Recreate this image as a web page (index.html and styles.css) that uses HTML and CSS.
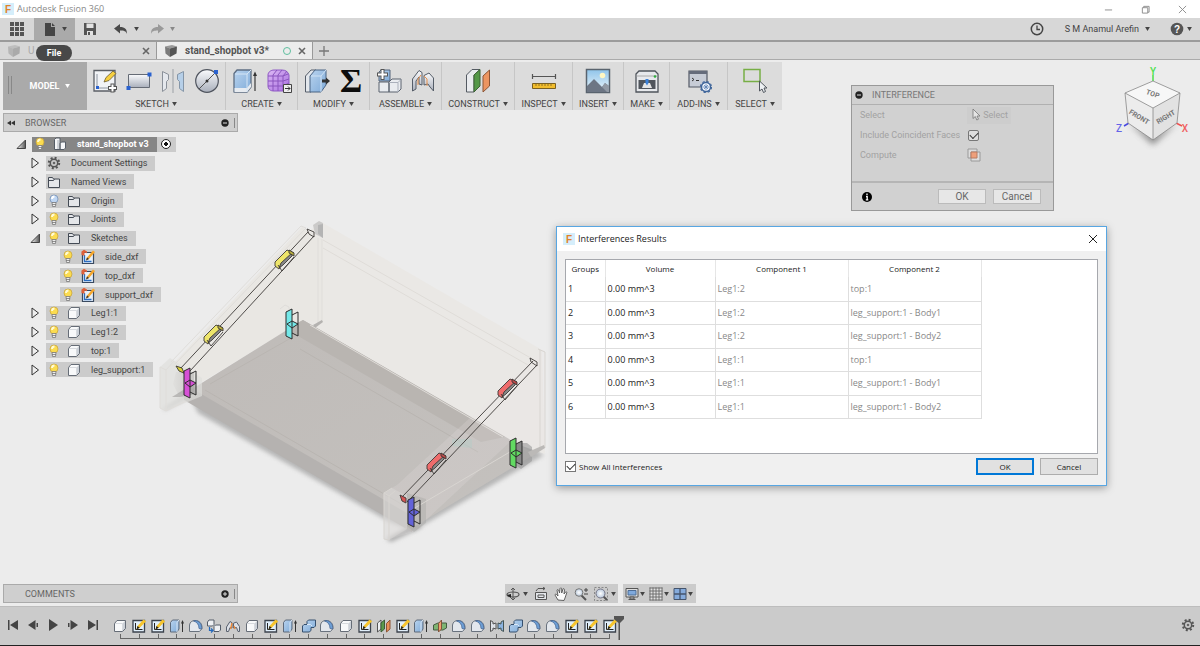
FILE: index.html
```html
<!DOCTYPE html>
<html lang="en">
<head>
<meta charset="utf-8">
<title>Autodesk Fusion 360</title>
<link rel="stylesheet" href="styles.css">
</head>
<body>
<svg class="defs" width="0" height="0" aria-hidden="true">
  <defs>
    <linearGradient id="g-steel" x1="0" y1="0" x2="0" y2="1"><stop offset="0" stop-color="#fafbfd"/><stop offset="1" stop-color="#a9afbb"/></linearGradient>
    <linearGradient id="g-blue" x1="0" y1="0" x2="1" y2="1"><stop offset="0" stop-color="#b9d3ee"/><stop offset="1" stop-color="#7fabd9"/></linearGradient>
    <linearGradient id="g-sky" x1="0" y1="0" x2="0" y2="1"><stop offset="0" stop-color="#8fc4ea"/><stop offset="1" stop-color="#eef7fb"/></linearGradient>
    <linearGradient id="g-purple" x1="0" y1="0" x2="1" y2="1"><stop offset="0" stop-color="#dcb8f5"/><stop offset="1" stop-color="#a96fe0"/></linearGradient>
    <linearGradient id="g-tri" x1="0" y1="0" x2="1" y2="0"><stop offset="0" stop-color="#fff"/><stop offset="1" stop-color="#555"/></linearGradient>
    <radialGradient id="g-lens"><stop offset="0" stop-color="#fff"/><stop offset="1" stop-color="#b9c9dc"/></radialGradient>
  </defs>
  <symbol id="logo" viewBox="0 0 12 12"><rect width="12" height="12" fill="#d5eefb"/><text x="3" y="10" font-family="Liberation Sans" font-weight="700" font-size="10" fill="#e0812a">F</text></symbol>
  <symbol id="caret" viewBox="0 0 6 5"><path d="M0 0h6L3 5z" fill="currentColor"/></symbol>
  <symbol id="cube" viewBox="0 0 14 14"><path d="M1 2.500 8 1l5 1.500-7 2z" fill="currentColor" opacity=".55"/><path d="M1 2.500l5 2V13L1.500 9.500z" fill="currentColor" opacity=".75"/><path d="M6 4.500l7-2-.5 7L6 13z" fill="currentColor"/></symbol>
  <symbol id="x" viewBox="0 0 8 8"><path d="M1 1l6 6M7 1L1 7" stroke="#666" stroke-width="1.600" fill="none"/></symbol>
  <symbol id="thinx" viewBox="0 0 10 10"><path d="M1 1l8 8M9 1L1 9" stroke="currentColor" fill="none"/></symbol>
  <symbol id="gear" viewBox="0 0 16 16"><circle cx="8" cy="8" r="5.200" fill="none" stroke="#555" stroke-width="2" stroke-dasharray="2 2.084"/><circle cx="8" cy="8" r="3.700" fill="none" stroke="#555" stroke-width="1.500"/><circle cx="8" cy="8" r="1.300" fill="#666"/></symbol>
  <symbol id="bulb" viewBox="0 0 16 16"><circle cx="8" cy="6" r="4" fill="#fbdc50" stroke="#c9a640" stroke-width=".8"/><path d="M6 6a2.500 2.500 0 0 1 2.500-2.500" stroke="#fffbd8" fill="none" stroke-width="1.800"/><path d="M6 9.500h4l-.5 4h-3z" fill="#eee" stroke="#777" stroke-width=".8"/><path d="M6 11.500h4" stroke="#777" stroke-width=".8"/></symbol>
  <symbol id="bulb-off" viewBox="0 0 16 16"><circle cx="8" cy="6" r="4" fill="#bfd6f3" stroke="#7590b5" stroke-width=".8"/><path d="M6 6a2.500 2.500 0 0 1 2.500-2.500" stroke="#fff" fill="none" stroke-width="1.800"/><path d="M6 9.500h4l-.5 4h-3z" fill="#eee" stroke="#777" stroke-width=".8"/><path d="M6 11.500h4" stroke="#777" stroke-width=".8"/></symbol>
  <symbol id="folder" viewBox="0 0 16 16"><path d="M2.500 13.500V3.500h4l1 1.500h6v8.500z" fill="#e4e6e9" stroke="#444b55"/><path d="M2.500 6.500h5l1-1.500" stroke="#444b55" fill="none"/></symbol>
  <symbol id="body" viewBox="0 0 16 16"><path d="M10.500 13.500v-8l3-3v8z" fill="#ccd1d8"/><path d="M2.500 5.500 5 2.500h8.500l-3 3v8h-8z" fill="#f8f9fa"/><path d="M2.500 5.500h8v8" stroke="#d7dade" fill="none"/><path d="M2.500 5.500 5 2.500h8.500v8l-3 3h-8z" fill="none" stroke="#666d77" stroke-linejoin="round"/></symbol>
  <symbol id="comp" viewBox="0 0 16 16"><path d="M2.500 3.500 4 2h4v11.500H2.500zM8 7.500 9.500 6h4v6L12 13.500H8z" fill="#f5f6f8" stroke="#555c66" stroke-linejoin="round"/><path d="M6 4v9" stroke="#aab0ba"/></symbol>
  <symbol id="skdxf" viewBox="0 0 16 16"><path d="M2.500 3.500h11v11h-11z" fill="#e7f1fb" stroke="#3a4a60" stroke-width="1.200"/><path d="M4.500 6v6.500h7" stroke="#2a6cc0" fill="none" stroke-width="1.300"/><path d="M6 11.500l1-3L13 1.500l2 1.500-6 7z" fill="#f6a72c"/><path d="M6 11.500l1-3L9 10z" fill="#333"/><path d="M1.500 6V2.500L4 .8l3 1.700v1.800L4.500 3.500v3.200z" fill="#df5f38"/></symbol>
  <symbol id="sk" viewBox="0 0 16 16"><path d="M2 2.500h11.500V14H2z" fill="#e1effb" stroke="#3c434d" stroke-width="1.300"/><path d="M4.500 5v6.500h7" stroke="#222" fill="none"/><path d="M5.500 11.500 6.500 8 12.500 1.500l2.700 1.700-6.500 6.500z" fill="#f7c52e"/><path d="M5.500 11.500 6.500 8l2.200 1.700z" fill="#222"/></symbol>
  <symbol id="ext" viewBox="0 0 16 16"><path d="M1.500 4.500 3.500 2h6.500v9L8 14H1.500z" fill="url(#g-blue)" stroke="#5e6a7b"/><path d="M8 14V4.500l2-2.500" fill="none" stroke="#dbe7f4"/><path d="M13.500 14V4" stroke="#333"/><path d="M12 5.500 13.500 2 15 5.500z" fill="#333"/></symbol>
  <symbol id="fil" viewBox="0 0 16 16"><path d="M1.500 13.500V7C2 4 4 2.500 7 2.500c4.500 0 7 3 7 7v1l-2.500 3z" fill="#e3e7ed" stroke="#69727e"/><path d="M5.500 3c3.500 1 5.500 3.500 5.500 7.500l2.700.5C14 6 11.500 3 7 2.500z" fill="#6e9fd6" stroke="#3f5f8c" stroke-width=".7"/></symbol>
  <symbol id="copy" viewBox="0 0 16 16"><path d="M1.500 4 3 2h5v4.500L6.500 8h-5zM8 8.500 9.500 7h5v5L13 13.500H8z" fill="#eef0f4" stroke="#555d69"/><path d="M3.500 9v3.500h3M5 10.500l2 2-2 2" stroke="#2469bd" fill="none" stroke-width="1.200"/></symbol>
  <symbol id="jnt" viewBox="0 0 16 16"><path d="M1.500 13.500V9L5 3.500l2 1.200V10l-2-.5-1.500 4zM14.500 13.500V8.500L11.500 4l-3 1.200V10l3-.5 1.500 4z" fill="#dce0e7" stroke="#59616e"/><path d="M7 5l-1.500 6M9 8l1 3" stroke="#f08a38" stroke-width="1.300"/></symbol>
  <symbol id="comb" viewBox="0 0 16 16"><path d="M1.500 8 3 6.500h3V3.500L7.500 2h7v6L13 9.500h-3v2.700L8.500 14h-7z" fill="url(#g-blue)" stroke="#36506f"/><path d="M6 6.500h3.500L11 8" stroke="#dce9f7" fill="none"/></symbol>
  <symbol id="plane" viewBox="0 0 16 16"><path d="M1.500 5 5 2v9l-3.500 3z" fill="#eef0f3" stroke="#555"/><path d="M5 5l3.500-3v9L5 14z" fill="#5a9a4b" stroke="#3d5c38"/><path d="M10.500 5.500 14 2v9l-3.500 3z" fill="#ea8f58" stroke="#8d5535"/></symbol>
  <symbol id="mid" viewBox="0 0 16 16"><path d="M1.500 7 6 5h8.500v5L11 12H1.500z" fill="#7fb573" stroke="#455b3f"/><path d="M6.500 5.500l3-3.500v9l-3 3z" fill="#f0a070" stroke="#82533a"/></symbol>
  <symbol id="mir" viewBox="0 0 16 16"><path d="M1.500 2.500 4 4v2l3-1v6L4 10v2l-2.500 1.500z" fill="#dfe3e9" stroke="#555"/><path d="M14.500 2.500 12 4v2L9 5v6l3-1v2l2.500 1.500z" fill="#8cb3df" stroke="#455"/></symbol>
  <symbol id="tri" viewBox="0 0 16 16"><path d="M5 3v10l6.500-5z" fill="#eee" stroke="#333" stroke-linejoin="round"/></symbol>
  <symbol id="tri-open" viewBox="0 0 16 16"><path d="M4 12.500h8.500V4z" fill="url(#g-tri)" stroke="#444"/></symbol>
</svg>

<header class="titlebar">
  <svg class="i12"><use href="#logo"/></svg><span>Autodesk Fusion 360</span>
  <div class="wincontrols">
    <button aria-label="Minimize"><svg class="i9" viewBox="0 0 10 10"><path d="M1 5.500h8" stroke="#888"/></svg></button>
    <button aria-label="Restore"><svg class="i9" viewBox="0 0 10 10"><path d="M1.500 3h6v6h-6zM3 3V1.500h6V8H7.500" fill="none" stroke="#888"/></svg></button>
    <button aria-label="Close"><svg class="i9"><use href="#thinx"/></svg></button>
  </div>
</header>

<nav class="quickbar" aria-label="Application bar">
  <button class="q apps" aria-label="Data panel"><svg class="i14" viewBox="0 0 14 14"><path d="M0 0h4v4H0zM5 0h4v4H5zM10 0h4v4h-4zM0 5h4v4H0zM5 5h4v4H5zM10 5h4v4h-4zM0 10h4v4H0zM5 10h4v4H5zM10 10h4v4h-4z" fill="#555"/></svg></button>
  <button class="q file" aria-label="File"><svg class="i14" viewBox="0 0 14 14"><path d="M2 1h6v4h4v9H2zM9 1l3 3H9z" fill="#454545"/></svg><svg class="car"><use href="#caret"/></svg></button>
  <button class="q save" aria-label="Save"><svg class="i14" viewBox="0 0 14 14"><path d="M1 1h11l1 1v11H1z" fill="#555"/><path d="M3.500 1.500h7V6h-7zM4 9h6v4H4z" fill="#e2e2e2"/><path d="M5 10h2v3H5z" fill="#555"/></svg></button>
  <button class="q undo" aria-label="Undo"><svg class="i14" viewBox="0 0 14 14"><path d="M6 2v3c5 0 7 2 7 7-1-3-3-3.500-7-3.500v3L0 6.500z" fill="#4a4a4a"/></svg><svg class="car"><use href="#caret"/></svg></button>
  <button class="q redo" aria-label="Redo"><svg class="i14" viewBox="0 0 14 14"><path d="M8 2v3c-5 0-7 2-7 7 1-3 3-3.500 7-3.500v3l6-5z" fill="#999"/></svg><svg class="car"><use href="#caret"/></svg></button>
  <div class="account">
    <button class="q" aria-label="Job status"><svg class="i14" viewBox="0 0 14 14"><circle cx="7" cy="7" r="5.700" fill="none" stroke="#444" stroke-width="1.500"/><path d="M7 3.500V7.500h3" fill="none" stroke="#444" stroke-width="1.300"/></svg></button>
    <button class="q user">S M Anamul Arefin<svg class="car"><use href="#caret"/></svg></button>
    <button class="q help" aria-label="Help"><svg class="i14" viewBox="0 0 14 14"><circle cx="7" cy="7" r="6.300" fill="#555"/><text x="7" y="10.500" text-anchor="middle" font-family="Liberation Sans" font-weight="700" font-size="10" fill="#fff">?</text></svg><svg class="car"><use href="#caret"/></svg></button>
  </div>
</nav>

<div class="tabs">
  <div class="tab"><svg class="i14 faded"><use href="#cube"/></svg><span class="faded">U</span><button class="end" aria-label="Close first document"><svg class="i8"><use href="#x"/></svg></button></div>
  <div class="tab active"><svg class="i14"><use href="#cube"/></svg><span>stand_shopbot v3*</span><i class="ring end"></i><button aria-label="Close stand_shopbot"><svg class="i8"><use href="#x"/></svg></button></div>
  <button class="newtab" aria-label="New tab"><svg class="i10" viewBox="0 0 10 10"><path d="M5 0v10M0 5h10" stroke="#777" stroke-width="1.300"/></svg></button>
  <div class="tip" role="tooltip">File</div>
</div>

<main class="workspace">
  <svg class="scene" viewBox="150 210 410 340" role="img" aria-label="Model of a stand">
    <defs>
      <filter id="soft" x="-20%" y="-20%" width="140%" height="140%"><feGaussianBlur stdDeviation="2"/></filter>
      <linearGradient id="edge" x1="0" y1="0" x2="1" y2="0"><stop offset="0" stop-color="#dddcda"/><stop offset="1" stop-color="#aeacaa"/></linearGradient>
      <linearGradient id="floor" x1="0" y1="0" x2="1" y2="1"><stop offset="0" stop-color="#bfbbb8"/><stop offset="1" stop-color="#c4c1be"/></linearGradient>
    </defs>
    <path d="M190 396 320 322l224 133-131 76-25-10-190-108z" fill="#999" opacity=".65" filter="url(#soft)"/>
    <path d="M386 539l30-16 6 4-31 15zM163 409l32-20v4l-30 17z" fill="#aaa" filter="url(#soft)"/>
    <path d="M303 234l20-11 219 127 3 104-40-14-200-115z" fill="#eae8e5"/>
    <path d="M171 366 302 227l20 12v84l-18-3-102 62z" fill="#e9e7e3"/>
    <path d="M303 320 535 454 412 528 184 394z" fill="url(#floor)"/>
    <path d="M303 320 505 437l-24 5-195-113z" fill="#b9b5b1"/>
    <path d="M184 384 412 516v16L184 400z" fill="#b5b2b0"/>
    <path d="M300 349l178 103M210 384l88-50M205 390l198 115" stroke="#b9b5b1" fill="none"/>
    <path d="M160 367l10-9 32 20v18l-36 15-6-3z" fill="#dfdedc" opacity=".65"/>
    <path d="M176 372h18v20l-16 2-5-10z" fill="url(#edge)" opacity=".5"/>
    <path d="M172 397l24-15v12l-16 3z" fill="#9f9d9b" opacity=".6"/>
    <path d="M160 367l6 3v41M166 370l8-9M160 367v41l6 3 20-10M171 362 301 226l5 2-131 136M318 238v86M322 239v81l-5 4M280 309l5-4 4 2v30" fill="none" stroke="#dfddda"/>
    <path d="M313 225l6-4 4 2v15l-8-4z" fill="#cbcac9"/><path d="M318 225l5-1v14l-5-4z" fill="#b4b4b4"/>
    <path d="M313 325l9-5 1 2-8 6z" fill="#b4b2b0"/>
    <path d="M323 240 536 361M323 248 528 365M310 325 503 437" fill="none" stroke="#dfdcd8"/>
    <path d="M536 357l6-7 3 2v98l-35-8-97 90-27 8-3-47 14-8z" fill="#e9e8e4" opacity=".2"/>
    <path d="M384 493l8-5 15 8v33l-18 11-5-1z" fill="#dad8d5" opacity=".5"/>
    <path d="M407 493l19 6v24l-12 9-7-6z" fill="#9c9a97" opacity=".3"/>
    <path d="M384 493v46l5 1v-44l-5-3 8-5M389 496l6-5M540 350v97M545 352v96M538 349l7 3M520 446l-112 66" fill="none" stroke="#d8d5d1"/>
    <path d="M521 443h6l5 4v14l-11 8-7-5z" fill="#999" opacity=".6"/>
    <path d="M528 452l16-7 1 3-14 9z" fill="#bbb9b7"/>
    <path d="M452 439h20v9l-20-2z" fill="#b4cbc7" opacity=".45"/>
    <g fill="none" stroke="#3c3937" stroke-width=".9">
      <path d="M180 369 308 232M190 371 314 236M307 229l7 3v5l-5-3zM183 373l7-3"/>
      <path d="M402 497 533 361M411 498 537 365M530 358l7 4v4l-6-4zM407 502l4-4"/>
      <path d="M176 366l6 2 2 5-5-2z" fill="#d8d038"/><path d="M400 495l6 3v5l-4-2z" fill="#d65555"/>
    </g>
    <g stroke="#3c3937" stroke-linejoin="round" stroke-width=".9">
      <g><path d="M275 262l12-12 7 3-12 11-3 5-4-3z" fill="#eee56a"/><path d="M279 268l2-5 12-11-1 4-9 9z" fill="#888"/><path d="M289 250l5 3v3l-5-3z" fill="#b9ae3c"/><path d="M278 265l4 6 12-14" fill="none"/></g>
      <g transform="translate(-71 75)"><path d="M275 262l12-12 7 3-12 11-3 5-4-3z" fill="#eee56a"/><path d="M279 268l2-5 12-11-1 4-9 9z" fill="#888"/><path d="M289 250l5 3v3l-5-3z" fill="#b9ae3c"/><path d="M278 265l4 6 12-14" fill="none"/></g>
      <g transform="translate(223 129)"><path d="M275 262l12-12 7 3-12 11-3 5-4-3z" fill="#ef6c6c"/><path d="M279 268l2-5 12-11-1 4-9 9z" fill="#888"/><path d="M289 250l5 3v3l-5-3z" fill="#b94a4a"/><path d="M278 265l4 6 12-14" fill="none"/></g>
      <g transform="translate(152 203)"><path d="M275 262l12-12 7 3-12 11-3 5-4-3z" fill="#ef6c6c"/><path d="M279 268l2-5 12-11-1 4-9 9z" fill="#888"/><path d="M289 250l5 3v3l-5-3z" fill="#b94a4a"/><path d="M278 265l4 6 12-14" fill="none"/></g>
    </g>
    <g stroke="#2c2c2c" stroke-linejoin="round" stroke-width="1">
      <g fill="#74e8e8"><path d="M286 312l6-3v30l-6-3zM287 324l5-3 6 3-6 4z"/><path d="M292 315l6-3v24l-6-3" fill="none"/></g>
      <g fill="#d650d6" transform="translate(-102 59)"><path d="M286 312l6-3v30l-6-3zM287 324l5-3 6 3-6 4z"/><path d="M292 315l6-3v24l-6-3" fill="none"/></g>
      <g fill="#6363d8" transform="translate(122 188)"><path d="M286 312l6-3v30l-6-3zM287 324l5-3 6 3-6 4z"/><path d="M292 315l6-3v24l-6-3" fill="none"/></g>
      <g fill="#62da62" transform="translate(224 129)"><path d="M292 315l6-3v24l-6-3" fill="#888"/><path d="M286 312l6-3v30l-6-3zM287 324l5-3 6 3-6 4z"/></g>
    </g>
  </svg>

  <div class="toolbar" role="toolbar" aria-label="Model tools">
    <button class="mode"><i class="grip"></i><span>MODEL</span><svg class="car"><use href="#caret"/></svg></button>
    <div class="group"><div class="icons">
      <svg class="tool" viewBox="0 0 26 26"><path d="M2 2.500h21V23H2z" fill="#f1f3f6" stroke="#5b5f66" stroke-width="1.300"/><path d="M5 6v14h13" stroke="#8c949f" fill="none"/><rect x="4" y="18" width="3" height="3" fill="#2a62cf"/><path d="M12 14l2-4.500L21 3l3 2.500-7 7z" fill="#f6cf3f" stroke="#6a5b2d" stroke-width=".8"/><path d="M16 20h9M20.500 15.500v9" stroke="#555" stroke-width="4"/><path d="M17 20h7M20.500 16.500v7" stroke="#fff" stroke-width="2"/></svg>
      <svg class="tool" viewBox="0 0 26 26"><path d="M2.500 6.500h21v13h-21z" fill="url(#g-steel)" stroke="#656b75"/><path d="M21.500 4.500h4v4h-4zM.5 18h4v4h-4z" fill="#2a62cf"/></svg>
      <svg class="tool" viewBox="0 0 26 26"><path d="M2.500 3.500l6 3v5l-2 2v7l-4 3z" fill="#e5e8ed" stroke="#8a9099"/><path d="M23.500 3.500l-6 3v5l2 2v7l4 3z" fill="#b6cfe8" stroke="#8596a8"/><path d="M13 1v24" stroke="#9ba0a6"/></svg>
      <svg class="tool" viewBox="0 0 26 26"><circle cx="13" cy="13" r="11.300" fill="url(#g-steel)" stroke="#50555f" stroke-width="1.200"/><path d="M5 21 21 5" stroke="#555"/><circle cx="13" cy="13" r="1.500" fill="#333"/><path d="M20 2h4v4h-4z" fill="#2a62cf"/></svg>
    </div><button class="label">SKETCH<svg class="car"><use href="#caret"/></svg></button></div>
    <div class="group"><div class="icons">
      <svg class="tool" viewBox="0 0 26 26"><path d="M2 5.500 5 2h14v17l-4 5H2z" fill="url(#g-blue)" stroke="#5d6d82" stroke-width="1.300" stroke-linejoin="round"/><path d="M2.500 20H15l4-5v4l-4 5H2.500z" fill="#e7ebf0"/><path d="M15 24V6l4-4M3 6h12" fill="none" stroke="#d5e5f5"/><path d="M23 23V6" stroke="#444" stroke-width="1.300"/><path d="M21 8l2-4.500L25 8z" fill="#333"/></svg>
      <svg class="tool" viewBox="0 0 26 26"><path d="M2 7c0-3 3-5 6-5h8c4 0 6 2 7 5v9c-1 4-3 6-6 7H8c-4 0-6-2-6-5z" fill="url(#g-purple)" stroke="#8f5ac5"/><path d="M2 8h15l5-2M2 13h15l6-2M2 18h15l6-3M7 23V7l4-5M12 23V7l4-5M17 23V8l4-5" stroke="#8a55be" fill="none"/><path d="M17.500 16.500h8v8h-8z" fill="#eee" stroke="#444"/><path d="M19 20.500h5M22 18.500l2 2-2 2" stroke="#333" fill="none"/></svg>
    </div><button class="label">CREATE<svg class="car"><use href="#caret"/></svg></button></div>
    <div class="group"><div class="icons">
      <svg class="tool" viewBox="0 0 26 26"><path d="M1.500 8 7 2h5L7 8v16H1.500z" fill="#e3e7ec" stroke="#555d69"/><path d="M6 8l5-6h11v15l-5 7H6z" fill="url(#g-blue)" stroke="#4b6484" stroke-linejoin="round"/><path d="M17 24V8l5-6M7 8h10" fill="none" stroke="#d0e2f4"/><path d="M18 11.500h4V9.500l4 3.500-4 3.500v-2h-4z" fill="#333"/></svg>
      <svg class="tool" viewBox="0 0 26 26"><text x="13" y="24" text-anchor="middle" font-family="Liberation Serif" font-weight="700" font-size="34" fill="#0d0d0d">Σ</text></svg>
    </div><button class="label">MODIFY<svg class="car"><use href="#caret"/></svg></button></div>
    <div class="group"><div class="icons">
      <svg class="tool" viewBox="0 0 26 26"><path d="M3 4l2-2h9v11H3z" fill="url(#g-blue)" stroke="#54657b"/><path d="M3 14h10v10H3zM13 14l3-3h9v10l-3 3h-9z" fill="#e9ecf0" stroke="#5b626e"/><path d="M22 24V14.500h-9M22 14.500l3-3" fill="none" stroke="#aab0bb"/><path d="M1 6.500h11M6.500 1v11" stroke="#555" stroke-width="4"/><path d="M2 6.500h9M6.500 2v9" stroke="#fff" stroke-width="2"/></svg>
      <svg class="tool" viewBox="0 0 26 26"><path d="M2.500 23V11L9 2.500l3 2V17l-3-1V9l-3 4v8z" fill="url(#g-steel)" stroke="#555d68"/><path d="M23.500 23V10L19 5l-5 2.500V17l4-1 2 3z" fill="url(#g-steel)" stroke="#555d68"/><path d="M11 7l-3 4v6M14 8l3 3v7" stroke="#e8914c" fill="none"/></svg>
    </div><button class="label">ASSEMBLE<svg class="car"><use href="#caret"/></svg></button></div>
    <div class="group"><div class="icons">
      <svg class="tool" viewBox="0 0 26 26"><path d="M1.500 7 7 1.500h8L9 7v17H1.500z" fill="#e9ebee" stroke="#545a62"/><path d="M9 7l6-5.500V18l-6 6z" fill="#559848" stroke="#3c6335"/><path d="M18 8l6.500-6v16L18 24z" fill="#ec9561" stroke="#8c5636"/></svg>
    </div><button class="label">CONSTRUCT<svg class="car"><use href="#caret"/></svg></button></div>
    <div class="group"><div class="icons">
      <svg class="tool" viewBox="0 0 26 26"><path d="M2 8.500h22M1.500 6v5M24.500 6v5" stroke="#555" stroke-width="1.200"/><path d="M1.500 15.500h23v5h-23z" fill="#f2bd2c" stroke="#7a6020"/><path d="M5 16v2M8 16v2M11 16v2M14 16v2M17 16v2M20 16v2" stroke="#7a6020" stroke-width=".8"/></svg>
    </div><button class="label">INSPECT<svg class="car"><use href="#caret"/></svg></button></div>
    <div class="group"><div class="icons">
      <svg class="tool" viewBox="0 0 26 26"><path d="M1.500 1.500h23v23h-23z" fill="url(#g-sky)" stroke="#59636e" stroke-width="1.500"/><circle cx="17.500" cy="7.500" r="2.800" fill="#fff7c2"/><path d="M2 18l7-7 8 8 3-4 4 3v6H2z" fill="#6d7684"/><path d="M17 19l3-4 4 3v6h-2z" fill="#929aa5"/></svg>
    </div><button class="label">INSERT<svg class="car"><use href="#caret"/></svg></button></div>
    <div class="group"><div class="icons">
      <svg class="tool" viewBox="0 0 26 26"><path d="M2 6l3-3h16l3 3v18H2z" fill="#e7e9ec" stroke="#4f545b" stroke-width="1.300"/><path d="M2.500 8h21" stroke="#aaa"/><path d="M4.500 12h17v9h-17z" fill="#50555c"/><path d="M8 20l2-5h6l2 5z" fill="#e5e5e5"/><path d="M11.500 11h3v4L13 17.500 11.500 15z" fill="#3b82d9"/><circle cx="21" cy="8.500" r="1.300" fill="#2fae3e"/></svg>
    </div><button class="label">MAKE<svg class="car"><use href="#caret"/></svg></button></div>
    <div class="group"><div class="icons">
      <svg class="tool" viewBox="0 0 26 26"><path d="M3 3h18v16H3z" fill="#c7ccd6" stroke="#535965" stroke-width="1.200"/><path d="M3 3h18v3H3z" fill="#656c7b"/><path d="M6 10l2 1.500L6 13M10 12.500h3" stroke="#333" fill="none"/><circle cx="20" cy="19" r="4.500" fill="#f3f7fd" stroke="#40669b" stroke-width="1.500"/><circle cx="20" cy="19" r="5.500" fill="none" stroke="#40669b" stroke-width="1.200" stroke-dasharray="2.300 2.020"/><path d="M20 16v6M17 19h6M18 17l4 4M22 17l-4 4" stroke="#5a80b4" stroke-width=".8"/></svg>
    </div><button class="label">ADD-INS<svg class="car"><use href="#caret"/></svg></button></div>
    <div class="group"><div class="icons">
      <svg class="tool" viewBox="0 0 26 26"><path d="M2 1.500h16v12H2z" fill="none" stroke="#77ae45" stroke-width="1.500"/><path d="M17.500 13v10l2.500-2 1.500 3.500 2-1-1.500-3.500h3z" fill="#eef1f4" stroke="#50565e"/></svg>
    </div><button class="label">SELECT<svg class="car"><use href="#caret"/></svg></button></div>
  </div>

  <section class="sidepanel">
    <span class="rew"><svg class="i8" viewBox="0 0 8 8"><path d="M4 1.500v5L0 4zM8 1.500v5L4 4z" fill="#333"/></svg></span><h2>BROWSER</h2>
    <button aria-label="Collapse browser"><svg class="i8" viewBox="0 0 8 8"><circle cx="4" cy="4" r="3.700" fill="#222"/><path d="M2 4h4" stroke="#ddd"/></svg></button><i class="bar"></i>
  </section>

  <ul class="tree">
    <li class="root"><svg class="i16"><use href="#tri-open"/></svg><div class="pill sel"><svg class="i16"><use href="#bulb"/></svg><svg class="i16"><use href="#comp"/></svg><span>stand_shopbot v3</span></div><label class="act"><input type="radio" name="active" checked aria-label="Activate component"></label></li>
    <li><svg class="i16"><use href="#tri"/></svg><div class="pill"><svg class="i16"><use href="#gear"/></svg><span>Document Settings</span></div></li>
    <li><svg class="i16"><use href="#tri"/></svg><div class="pill"><svg class="i16"><use href="#folder"/></svg><span>Named Views</span></div></li>
    <li><svg class="i16"><use href="#tri"/></svg><div class="pill"><svg class="i16"><use href="#bulb-off"/></svg><svg class="i16"><use href="#folder"/></svg><span>Origin</span></div></li>
    <li><svg class="i16"><use href="#tri"/></svg><div class="pill"><svg class="i16"><use href="#bulb"/></svg><svg class="i16"><use href="#folder"/></svg><span>Joints</span></div></li>
    <li><svg class="i16"><use href="#tri-open"/></svg><div class="pill"><svg class="i16"><use href="#bulb"/></svg><svg class="i16"><use href="#folder"/></svg><span>Sketches</span></div></li>
    <li class="sub"><div class="pill"><svg class="i16"><use href="#bulb"/></svg><svg class="i16"><use href="#skdxf"/></svg><span>side_dxf</span></div></li>
    <li class="sub"><div class="pill"><svg class="i16"><use href="#bulb"/></svg><svg class="i16"><use href="#skdxf"/></svg><span>top_dxf</span></div></li>
    <li class="sub"><div class="pill"><svg class="i16"><use href="#bulb"/></svg><svg class="i16"><use href="#skdxf"/></svg><span>support_dxf</span></div></li>
    <li><svg class="i16"><use href="#tri"/></svg><div class="pill"><svg class="i16"><use href="#bulb"/></svg><svg class="i16"><use href="#body"/></svg><span>Leg1:1</span></div></li>
    <li><svg class="i16"><use href="#tri"/></svg><div class="pill"><svg class="i16"><use href="#bulb"/></svg><svg class="i16"><use href="#body"/></svg><span>Leg1:2</span></div></li>
    <li><svg class="i16"><use href="#tri"/></svg><div class="pill"><svg class="i16"><use href="#bulb"/></svg><svg class="i16"><use href="#body"/></svg><span>top:1</span></div></li>
    <li><svg class="i16"><use href="#tri"/></svg><div class="pill"><svg class="i16"><use href="#bulb"/></svg><svg class="i16"><use href="#body"/></svg><span>leg_support:1</span></div></li>
  </ul>

  <svg class="viewcube" viewBox="1110 60 84 90" role="img" aria-label="View cube">
    <defs><filter id="cs" x="-30%" y="-30%" width="160%" height="160%"><feGaussianBlur stdDeviation="3"/></filter></defs>
    <path d="M1129 123l24 12 24-12-24 22z" fill="#777" opacity=".8" filter="url(#cs)"/>
    <path d="M1153 75v6" stroke="#4be04b" stroke-width="1.500"/><path d="M1129 123l-5 3" stroke="#4848e0" stroke-width="1.500"/><path d="M1176 123l6 3" stroke="#f05050" stroke-width="1.500"/>
    <path d="M1153 81l27 12-27 15-28-15z" fill="#f7f7f7"/><path d="M1125 93l28 15v32l-25-17z" fill="#ececec"/><path d="M1180 93l-27 15v32l24-17z" fill="#e2e2e2"/>
    <path d="M1153 81l27 12-3 30-24 17-25-17-3-30zM1125 93l28 15 27-15M1153 108v32" fill="none" stroke="#888" stroke-width=".8"/>
    <g font-family="Roboto" font-size="7" fill="#777" text-anchor="middle" font-weight="700">
      <text transform="translate(1152 96) rotate(20)">TOP</text><text transform="translate(1138 119) rotate(31)">FRONT</text><text transform="translate(1167 119) rotate(-31)">RIGHT</text>
    </g>
    <g font-family="Roboto" font-size="10" font-weight="500" text-anchor="middle"><text x="1153" y="75" fill="#4be04b">Y</text><text x="1119" y="132" fill="#6464e8">Z</text><text x="1185" y="132" fill="#f06060">X</text></g>
  </svg>

  <form class="interference">
    <h2><svg class="i8" viewBox="0 0 8 8"><circle cx="4" cy="4" r="3.700" fill="#222"/><path d="M2 4h4" stroke="#ddd"/></svg>INTERFERENCE</h2>
    <div class="opts">
      <span>Select</span><button type="button" class="pick"><svg class="i12" viewBox="0 0 12 12"><path d="M3 0v9.500l2.300-2 1.500 3.500 1.700-.8L7 7h3z" fill="#e5e5e5" stroke="#777" stroke-width=".8"/></svg>Select</button>
      <label for="cf">Include Coincident Faces</label><input class="check" type="checkbox" id="cf" checked>
      <span>Compute</span><button type="button" class="compute" aria-label="Compute"><svg class="i14" viewBox="0 0 14 14"><path d="M1 1h9v9H1z" fill="#ddd" stroke="#999"/><path d="M4 4h9v9H4z" fill="#ddd" stroke="#999"/><path d="M4 4h6v6H4z" fill="#ee9f7a" stroke="#b87a60"/></svg></button>
    </div>
    <footer><svg class="i10" viewBox="0 0 10 10"><circle cx="5" cy="5" r="5" fill="#000"/><path d="M5 1.500v1.500M4 4.500h1.200v3M3.800 7.800h2.500" stroke="#fff" stroke-width="1.300" fill="none"/></svg><button type="button" class="btn">OK</button><button type="button" class="btn">Cancel</button></footer>
  </form>

  <section class="results" role="dialog" aria-label="Interferences Results">
    <header><svg class="i12"><use href="#logo"/></svg><span>Interferences Results</span><button aria-label="Close"><svg class="i10"><use href="#thinx"/></svg></button></header>
    <div class="content">
      <div class="tablebox">
        <table>
          <colgroup><col class="c1"><col class="c2"><col class="c3"><col class="c3"></colgroup>
          <thead><tr><th>Groups</th><th>Volume</th><th>Component 1</th><th>Component 2</th></tr></thead>
          <tbody>
            <tr><td>1</td><td>0.00 mm^3</td><td>Leg1:2</td><td>top:1</td></tr>
            <tr><td>2</td><td>0.00 mm^3</td><td>Leg1:2</td><td>leg_support:1 - Body1</td></tr>
            <tr><td>3</td><td>0.00 mm^3</td><td>Leg1:2</td><td>leg_support:1 - Body2</td></tr>
            <tr><td>4</td><td>0.00 mm^3</td><td>Leg1:1</td><td>top:1</td></tr>
            <tr><td>5</td><td>0.00 mm^3</td><td>Leg1:1</td><td>leg_support:1 - Body1</td></tr>
            <tr><td>6</td><td>0.00 mm^3</td><td>Leg1:1</td><td>leg_support:1 - Body2</td></tr>
          </tbody>
        </table>
      </div>
      <footer><label><input class="check" type="checkbox" checked>Show All Interferences</label><button class="ok">OK</button><button>Cancel</button></footer>
    </div>
  </section>

  <div class="bottom">
    <section class="sidepanel">
      <span class="rew"></span><h2>COMMENTS</h2>
      <button aria-label="Expand comments"><svg class="i8" viewBox="0 0 8 8"><circle cx="4" cy="4" r="3.700" fill="#222"/><path d="M2 4h4M4 2v4" stroke="#ddd"/></svg></button><i class="bar"></i>
    </section>
    <div class="navbar">
      <div class="nav">
        <button aria-label="Orbit"><svg class="i14" viewBox="0 0 14 14"><path d="M7 1v12M5 3l2-2 2 2M5 11l2 2 2-2" stroke="#555" fill="none"/><ellipse cx="7" cy="7.500" rx="6" ry="2.500" fill="none" stroke="#555" stroke-width="1.200"/><path d="M1 8l4-1v4z" fill="#222"/></svg><svg class="car"><use href="#caret"/></svg></button>
        <button aria-label="Look at"><svg class="i14" viewBox="0 0 14 14"><path d="M1.500 5.500h11v7h-11z" fill="#e3e6ea" stroke="#555"/><path d="M4 8h6v2.500H4z" fill="none" stroke="#555"/><path d="M2 4l2-2.500h7M9 0l2 1.500L9 3" fill="none" stroke="#555"/></svg></button>
        <button aria-label="Pan"><svg class="i14" viewBox="0 0 14 14"><path d="M4 13 1 8c0-1 1-1.300 2 0l1 1L3 3c.5-1 1.500-.5 2 1l.5 2L6 1.500c.5-1 1.700-.8 1.700.3V6L9 2c.7-.8 1.600-.3 1.500.7L10 7l1.500-2c.8-.7 1.700 0 1.200 1L11 11l-1 2.500z" fill="#fbfbfb" stroke="#555" stroke-width=".9"/></svg></button>
        <button aria-label="Zoom"><svg class="i14" viewBox="0 0 14 14"><path d="M7 8l5 5" stroke="#555" stroke-width="2"/><circle cx="5" cy="5.500" r="3.800" fill="url(#g-lens)" stroke="#777"/><path d="M12 1v4M10 3h4M10 7h4" stroke="#444"/></svg></button>
        <button aria-label="Fit"><svg class="i14" viewBox="0 0 14 14"><path d="M.5.500h13v13H.5z" fill="none" stroke="#888" stroke-dasharray="2 1.500"/><path d="M9 9l4 4" stroke="#555" stroke-width="2"/><circle cx="6.500" cy="6.500" r="4.500" fill="url(#g-lens)" stroke="#778"/></svg><svg class="car"><use href="#caret"/></svg></button>
      </div>
      <div class="nav tight">
        <button aria-label="Display settings"><svg class="i14" viewBox="0 0 14 14"><path d="M1 1.500h12v8.500H1z" fill="#ddd" stroke="#555"/><path d="M3 3.500h8V8H3z" fill="#7fa9dc" stroke="#4f6e96"/><path d="M5 10h4v2H5zM3.500 12.500h7" fill="#bbb" stroke="#555"/></svg><svg class="car"><use href="#caret"/></svg></button>
        <button aria-label="Grid and snaps"><svg class="i14" viewBox="0 0 14 14"><path d="M1 1h12v12H1z" fill="#e2e2e2"/><path d="M1 .5v13M4 .5v13M7 .5v13M10 .5v13M13 .5v13M.5 1h13M.5 4h13M.5 7h13M.5 10h13M.5 13h13" stroke="#666" stroke-width=".9"/></svg><svg class="car"><use href="#caret"/></svg></button>
        <button aria-label="Viewports"><svg class="i14" viewBox="0 0 14 14"><path d="M1 1.500h12v11H1z" fill="#85abdc" stroke="#44546c"/><path d="M7 1.500v11M1 7h12" stroke="#44546c" stroke-width="1.300"/></svg><svg class="car"><use href="#caret"/></svg></button>
      </div>
    </div>
  </div>
</main>

<footer class="timeline">
  <div class="play">
    <button aria-label="Go to start"><svg class="i12" viewBox="0 0 12 12"><path d="M1 1h1.500v10H1zM11 1v10L3 6z" fill="#444"/></svg></button>
    <button aria-label="Step back"><svg class="i12" viewBox="0 0 12 12"><path d="M8.500 1v10L1 6zM9.500 4H11v4H9.500z" fill="#444"/></svg></button>
    <button aria-label="Play"><svg class="i12" viewBox="0 0 12 12"><path d="M2 0v12l9-6z" fill="#444"/></svg></button>
    <button aria-label="Step forward"><svg class="i12" viewBox="0 0 12 12"><path d="M3.500 1v10L11 6zM1 4h1.500v4H1z" fill="#444"/></svg></button>
    <button aria-label="Go to end"><svg class="i12" viewBox="0 0 12 12"><path d="M9.500 1H11v10H9.500zM1 1v10l8-5z" fill="#444"/></svg></button>
  </div>
  <div class="track">
    <ol>
      <li><svg class="i16"><use href="#body"/></svg></li><li><svg class="i16"><use href="#sk"/></svg></li><li><svg class="i16"><use href="#sk"/></svg></li><li><svg class="i16"><use href="#ext"/></svg></li><li><svg class="i16"><use href="#fil"/></svg></li><li><svg class="i16"><use href="#copy"/></svg></li><li><svg class="i16"><use href="#jnt"/></svg></li><li><svg class="i16"><use href="#body"/></svg></li><li><svg class="i16"><use href="#sk"/></svg></li><li><svg class="i16"><use href="#ext"/></svg></li><li><svg class="i16"><use href="#comb"/></svg></li><li><svg class="i16"><use href="#fil"/></svg></li><li><svg class="i16"><use href="#body"/></svg></li><li><svg class="i16"><use href="#sk"/></svg></li><li><svg class="i16"><use href="#plane"/></svg></li><li><svg class="i16"><use href="#sk"/></svg></li><li><svg class="i16"><use href="#ext"/></svg></li><li><svg class="i16"><use href="#mid"/></svg></li><li><svg class="i16"><use href="#fil"/></svg></li><li><svg class="i16"><use href="#fil"/></svg></li><li><svg class="i16"><use href="#mir"/></svg></li><li><svg class="i16"><use href="#comb"/></svg></li><li><svg class="i16"><use href="#fil"/></svg></li><li><svg class="i16"><use href="#fil"/></svg></li><li><svg class="i16"><use href="#sk"/></svg></li><li><svg class="i16"><use href="#sk"/></svg></li><li><svg class="i16"><use href="#sk"/></svg></li>
    </ol>
    <div class="line"></div>
  </div>
  <svg class="marker" viewBox="0 0 10 24"><path d="M0 0h10v3L6 7v17H4.500V7L0 3z" fill="#555"/></svg>
  <button class="settings" aria-label="Timeline settings"><svg class="i16"><use href="#gear"/></svg></button>
</footer>
</body>
</html>
```
FILE: styles.css
```css
* { box-sizing: border-box; }
body { margin: 0; min-height: 100vh; display: flex; flex-direction: column; background: #ececec; color: #444; font: 9px/12px Roboto, "Liberation Sans", sans-serif; overflow: hidden; }
svg { display: block; flex: none; }
button { border: 0; padding: 0; margin: 0; background: none; font: inherit; color: inherit; display: flex; align-items: center; justify-content: center; }
h2 { margin: 0; font: inherit; }
ul, ol { list-style: none; margin: 0; padding: 0; }
.defs { position: absolute; }
.i8 { width: 8px; height: 8px; }
.i9 { width: 9px; height: 9px; }
.i10 { width: 10px; height: 10px; }
.i12 { width: 12px; height: 12px; }
.i14 { width: 14px; height: 14px; }
.i16 { width: 16px; height: 16px; }
.car { width: 5px; height: 4px; }

.titlebar { height: 18px; background: #fff; display: flex; align-items: center; padding-left: 2px; gap: 3px; color: #888; font: 9px/14px "Open Sans", sans-serif; }
.wincontrols { margin-left: auto; display: flex; gap: 28px; padding-right: 13px; }

.quickbar { height: 24px; background: #d7d7d7; border-bottom: 2px solid #9b9b9b; display: flex; align-items: stretch; }
.q { gap: 5px; }
.apps { width: 34px; }
.file { width: 41px; background: #aaa; }
.save { width: 30px; }
.undo { margin-left: 9px; gap: 6px; }
.redo { margin-left: 11px; gap: 6px; color: #888; }
.account { margin-left: auto; display: flex; padding-right: 8px; }
.user { margin-left: 21px; margin-right: 20px; gap: 6px; }
.help { gap: 3px; }

.tabs { position: relative; height: 18px; background: #d7d7d7; border-bottom: 1px solid #aaa; display: flex; }
.tab { width: 157px; display: flex; align-items: center; padding: 0 6px 0 7px; gap: 7px; border-right: 1px solid #999; color: #555; }
.tab span { font-size: 10px; font-weight: 700; }
.tab .faded { color: #aaa; font-weight: 400; }
.tab.active { width: 156px; background: #ececec; }
.end { margin-left: auto; }
.ring { width: 8px; height: 8px; border: 1px solid #5fbf9f; border-radius: 50%; }
.newtab { width: 21px; }
.tip { position: absolute; left: 36px; top: 3px; width: 36px; height: 16px; border-radius: 8px; background: #484848; color: #fff; font-weight: 700; line-height: 16px; text-align: center; z-index: 2; }

.workspace { position: relative; flex: 1; display: flex; flex-direction: column; padding: 2px 3px 3px; }
.scene { position: absolute; left: 150px; top: 150px; width: 410px; height: 340px; }
.toolbar { position: relative; align-self: flex-start; display: grid; grid-template-columns: 84px 139px 72px 72px 72px 73px 58px 51px 46px 58px 54px; height: 48px; background: #dcdcdc; }
.mode { background: #aaa; color: #fff; font-weight: 700; gap: 6px; position: relative; }
.mode span { margin-left: 10px; }
.grip { position: absolute; left: 5px; top: 14px; width: 4px; height: 18px; border-left: 1px solid #888; border-right: 1px solid #888; }
.group { display: flex; flex-direction: column; align-items: center; border-right: 1px solid #c6c6c6; padding-top: 6px; gap: 4px; }
.group:last-child { border-right: 0; }
.icons { display: flex; gap: 8px; }
.tool { width: 26px; height: 26px; }
.label { gap: 3px; }

.sidepanel { position: relative; width: 235px; height: 19px; background: #cfcfcf; border: 1px solid #aaa; display: flex; align-items: center; color: #666; padding-right: 1px; }
.toolbar + .sidepanel { margin-top: 3px; }
.rew { width: 21px; padding-left: 3px; }
.sidepanel button { margin-left: auto; margin-right: 5px; }
.bar { width: 2px; height: 10px; border-left: 1px solid #888; }

.tree { position: relative; display: grid; grid-template-rows: repeat(13, 1fr); height: 244px; margin-top: 3px; }
.tree li { display: flex; align-items: center; gap: 3px; padding-left: 24px; }
.tree li.root { padding-left: 10px; }
.tree li.sub { padding-left: 57px; }
.pill { display: flex; align-items: center; gap: 4px; height: 15px; background: #cbcbcb; padding-right: 8px; }
.pill span { margin-left: 5px; white-space: nowrap; }
.sel { background: #868686; color: #fff; font-weight: 700; }
.act { width: 19px; height: 15px; background: #cbcbcb; margin-left: -3px; display: flex; align-items: center; justify-content: center; }
.act input { appearance: none; margin: 0; width: 10px; height: 10px; border: 1px solid #222; border-radius: 50%; background: radial-gradient(#111 0 2px, #fff 2px); }

.viewcube { position: absolute; right: 6px; top: 0; width: 84px; height: 90px; }

.interference { position: absolute; right: 146px; top: 25px; width: 203px; background: #d1d1d1; border: 1px solid #999; color: #a2a2a2; }
.interference h2 { display: flex; align-items: center; gap: 9px; height: 19px; padding-left: 3px; border-bottom: 1px solid #b0b0b0; color: #777; }
.opts { display: grid; grid-template-columns: 107px auto; grid-template-rows: 20px 20px 20px; align-items: center; justify-content: start; height: 78px; padding-left: 8px; border-bottom: 2px solid #b5b5b5; }
.opts label { white-space: nowrap; }
.pick { width: 44px; height: 17px; gap: 1px; background: #cdcdcd; }
.compute { justify-self: start; }
.check { appearance: none; margin: 0; width: 11px; height: 11px; border: 1px solid #777; background: #eee; display: grid; place-items: center; }
.check:checked::after { content: ""; width: 7px; height: 4px; border-left: 1px solid #333; border-bottom: 1px solid #333; transform: translateY(-1px) rotate(-45deg); }
.interference .check { margin-left: 1px; border-radius: 2px; background: #ddd; }
.interference footer { height: 27px; display: flex; align-items: center; gap: 7px; padding: 0 12px 0 10px; }
.btn { width: 48px; height: 15px; background: #e7e7e7; border: 1px solid #bbb; color: #666; font-size: 10px; }
.interference footer svg + .btn { margin-left: auto; }

.results { position: absolute; right: 93px; top: 166px; width: 551px; background: #f0f0f0; border: 1px solid #58a6e2; box-shadow: 0 2px 8px rgba(0, 0, 0, .35); color: #222; font: 9px/12px "Open Sans", sans-serif; }
.results header { height: 24px; background: #fff; display: flex; align-items: center; padding: 0 8px 0 6px; gap: 3px; }
.results header button { margin-left: auto; }
.content { padding: 8px 8px 10px; }
.tablebox { height: 195px; background: #fff; border: 1px solid #a6a8ad; }
table { border-collapse: collapse; table-layout: fixed; width: 415px; }
.c1 { width: 39px; }
.c2 { width: 110px; }
.c3 { width: 133px; }
th { height: 17px; padding: 0; font: 8px/12px "Open Sans", sans-serif; border-right: 1px solid #e6e6e6; }
td { height: 23px; padding: 0 2px; border-right: 1px solid #dedede; border-bottom: 1px solid #dedede; }
tbody tr:nth-child(odd) td { height: 24px; }
td:nth-child(n+3) { color: #888; }
.results footer { display: flex; align-items: center; gap: 6px; margin-top: 4px; font-size: 8px; }
.results label { display: flex; align-items: center; gap: 3px; margin-right: auto; }
.results .check { background: #fff; }
.results footer button { width: 58px; height: 17px; background: #e1e1e1; border: 1px solid #adadad; }
.results footer .ok { border: 2px solid #0078d7; }

.bottom { position: relative; margin-top: auto; display: grid; grid-template-columns: 1fr auto 1fr; align-items: center; }
.navbar { display: flex; gap: 5px; }
.nav { height: 19px; background: #cbcbcb; display: flex; align-items: center; justify-content: center; gap: 6px; width: 113px; }
.nav button { gap: 3px; }
.nav.tight { width: 73px; gap: 4px; }
.nav.tight button { gap: 1px; }

.timeline { height: 40px; background: #cbcbcb; border-top: 1px solid #bdbdbd; border-bottom: 1px solid #222; display: flex; align-items: flex-start; padding: 0 4px 0 7px; }
.play { display: flex; gap: 8px; padding-top: 12px; margin-right: 12px; }
.track { width: 508px; padding-top: 11px; }
.track ol { display: grid; grid-template-columns: repeat(27, 1fr); }
.track li { display: flex; flex-direction: column; align-items: center; }
.track li::after { content: ""; width: 1px; height: 4px; background: #666; }
.line { height: 1px; background: #666; margin: 0 9px; }
.marker { width: 10px; height: 24px; margin: 9px 0 0 -5px; }
.settings { margin-left: auto; padding-top: 10px; }
```
